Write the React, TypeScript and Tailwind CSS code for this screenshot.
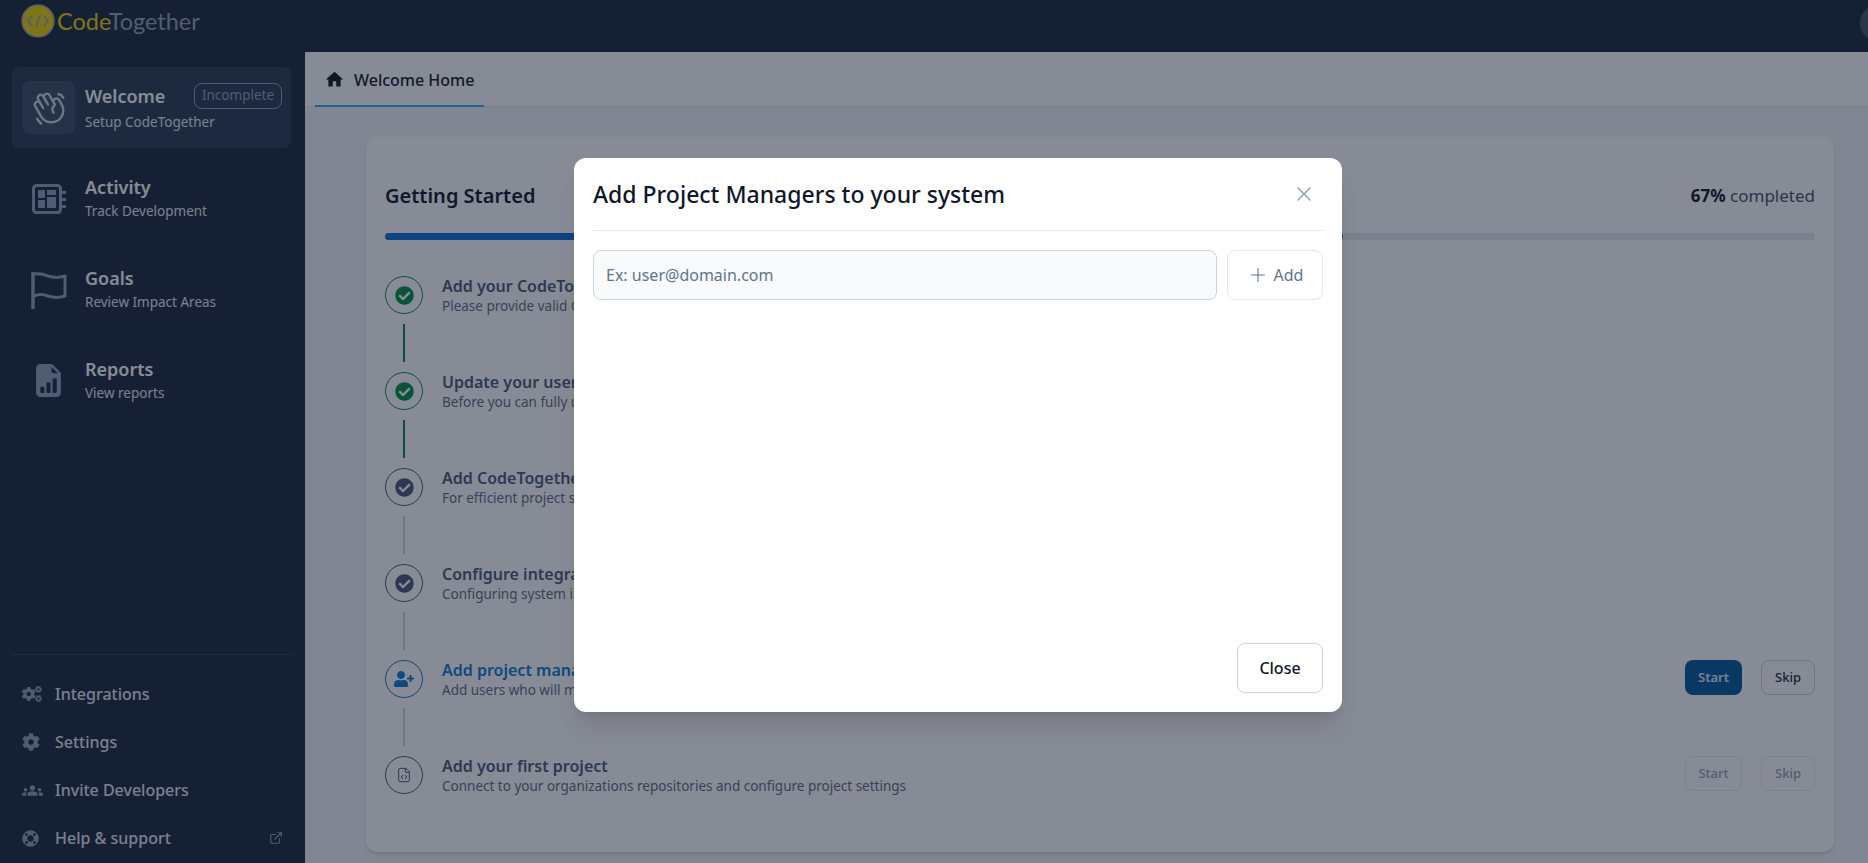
import { ExternalLink, FileCode, Plus, X } from 'lucide-react'
import { BsFileEarmarkBarGraphFill } from 'react-icons/bs'
import { FaCheckCircle, FaCog, FaCogs, FaLifeRing, FaUserPlus } from 'react-icons/fa'
import { MdGroups, MdHome } from 'react-icons/md'
import { PiHandWaving } from 'react-icons/pi'

const font = { fontFamily: '"Noto Sans", sans-serif' }

const ActivityIcon = () => (
  <svg width="34" height="30" viewBox="0 0 34 30" fill="none" className="text-slate-400">
    <rect x="1.5" y="1.5" width="27" height="27" rx="3" stroke="currentColor" strokeWidth="3" />
    <path d="M6 6h7v8H6zM15 6h9v5h-9zM6 16h7v8H6zM15 13h9v11h-9z" fill="currentColor" />
    <path d="M30 7h4v3h-4zM30 14h4v3h-4zM30 21h4v3h-4z" fill="currentColor" />
  </svg>
)

const FlagIcon = () => (
  <svg width="36" height="38" viewBox="0 0 36 38" fill="none" className="text-slate-400">
    <path d="M2 1v37" stroke="currentColor" strokeWidth="3.5" />
    <path
      d="M3 3c5-1 9 0 14 2 6 2 11 2 17 0v20c-6 2-11 2-17 0-5-2-9-2-14 0"
      stroke="currentColor"
      strokeWidth="3"
      strokeLinejoin="round"
    />
  </svg>
)

const navItems = [
  { title: 'Activity', sub: 'Track Development', icon: <ActivityIcon /> },
  { title: 'Goals', sub: 'Review Impact Areas', icon: <FlagIcon /> },
  { title: 'Reports', sub: 'View reports', icon: <BsFileEarmarkBarGraphFill size={33} className="text-slate-400" /> },
]

const bottomItems = [
  { label: 'Integrations', icon: <FaCogs size={20} /> },
  { label: 'Settings', icon: <FaCog size={18} /> },
  { label: 'Invite Developers', icon: <MdGroups size={21} /> },
  { label: 'Help & support', icon: <FaLifeRing size={17} /> },
]

const steps = [
  { title: 'Add your CodeTogether license', sub: 'Please provide valid CodeTogether license details', state: 'done' },
  { title: 'Update your user profile', sub: 'Before you can fully use the system, update your profile', state: 'done' },
  { title: 'Add CodeTogether admins', sub: 'For efficient project setup, add other administrators', state: 'checked' },
  { title: 'Configure integrations', sub: 'Configuring system integrations lets you connect tools', state: 'checked' },
  { title: 'Add project managers', sub: 'Add users who will manage projects in your organization', state: 'active' },
  { title: 'Add your first project', sub: 'Connect to your organizations repositories and configure project settings', state: 'todo' },
]

const StepIcon = ({ state }: { state: string }) => {
  if (state === 'done') {
    return (
      <div className="flex h-[38px] w-[38px] shrink-0 items-center justify-center rounded-full border border-[#048f44] text-[#048f44]">
        <FaCheckCircle size={19} />
      </div>
    )
  }
  if (state === 'checked') {
    return (
      <div className="flex h-[38px] w-[38px] shrink-0 items-center justify-center rounded-full border border-[#4b5b78] text-[#4b5b78]">
        <FaCheckCircle size={19} />
      </div>
    )
  }
  if (state === 'active') {
    return (
      <div className="flex h-[38px] w-[38px] shrink-0 items-center justify-center rounded-full border border-[#0a7cd2] text-[#0a7cd2]">
        <FaUserPlus size={20} />
      </div>
    )
  }
  return (
    <div className="flex h-[38px] w-[38px] shrink-0 items-center justify-center rounded-full border border-[#4b5b78] text-[#4b5b78]">
      <FileCode size={16} strokeWidth={1.5} />
    </div>
  )
}

export default function App() {
  return (
    <div className="relative h-[863px] w-[1868px] overflow-hidden bg-slate-100" style={font}>
      <header className="flex h-[52px] items-start justify-between bg-slate-800 pl-[21px] pt-1">
        <div className="flex items-center">
          <svg width="34" height="34" viewBox="0 0 34 34" fill="none">
            <circle cx="17" cy="17" r="16" fill="#efd302" stroke="#94a3b8" strokeWidth="1.5" />
            <path d="M11 12l-4 5 4 5M23 12l4 5-4 5M19 11l-4 12" stroke="#94a3b8" strokeWidth="1.8" />
          </svg>
          <span className="ml-[2px] text-[23.5px] leading-[34px] text-slate-400" style={{ fontFamily: 'Lato, sans-serif' }}>
            <span className="text-[#efd302]">Code</span>Together
          </span>
        </div>
        <div className="mr-[-28px] mt-px h-9 w-9 rounded-full bg-slate-600" />
      </header>

      <div className="flex h-[811px]">
        <aside className="flex w-[305px] shrink-0 flex-col justify-between bg-slate-800 px-3 pt-[15px]">
          <nav className="flex flex-col gap-[10px]">
            <div className="flex h-[81px] w-[279px] items-center gap-[10px] rounded-lg bg-[#2b3a52] pl-[10px] pr-[9px]">
              <div className="flex h-[53px] w-[53px] shrink-0 items-center justify-center rounded-lg bg-[#3e4d66] text-slate-300">
                <PiHandWaving size={38} />
              </div>
              <div className="flex-1">
                <div className="flex items-center justify-between">
                  <span className="text-[18px] font-semibold leading-[26px] text-white">Welcome</span>
                  <span className="flex h-[26px] w-[88px] items-center justify-center rounded-lg border border-slate-400 text-[13.5px] text-slate-400">
                    Incomplete
                  </span>
                </div>
                <div className="pt-[2px] text-[13.5px] leading-[22px] text-slate-200">Setup CodeTogether</div>
              </div>
            </div>
            {navItems.map((item) => (
              <div key={item.title} className="flex h-[81px] items-center gap-[10px] pl-[10px]">
                <div className="flex h-[53px] w-[53px] shrink-0 items-center justify-center">{item.icon}</div>
                <div className="-mt-[2px]">
                  <div className="text-[18px] font-semibold leading-[26px] text-white">{item.title}</div>
                  <div className="text-[13.5px] leading-[22px] text-slate-200">{item.sub}</div>
                </div>
              </div>
            ))}
          </nav>

          <div className="border-t border-slate-700 pb-px pt-[15px]">
            {bottomItems.map((item) => (
              <div key={item.label} className="flex h-12 items-center pl-[10px] text-slate-400">
                <div className="flex w-[33px] shrink-0">{item.icon}</div>
                <span className="text-[16px] font-medium text-slate-200">{item.label}</span>
                {item.label === 'Help & support' && <ExternalLink size={14} className="ml-auto mr-[10px]" />}
              </div>
            ))}
          </div>
        </aside>

        <main className="min-w-0 flex-1">
          <div className="flex h-[55px] border-b border-slate-200 bg-white pl-[10px]">
            <div className="flex h-[55px] w-[169px] items-center gap-[9px] border-b-2 border-[#22b0ff] pl-[9px] pt-[2px]">
              <MdHome size={21} className="text-slate-900" />
              <span className="text-[16px] font-medium text-slate-900">Welcome Home</span>
            </div>
          </div>

          <div className="pl-[61px] pr-[34px] pt-[30px]">
            <section className="h-[715px] rounded-xl bg-white px-[19px] pt-[39px] shadow-md">
              <div className="flex h-10 items-center justify-between">
                <h2 className="text-[20px] font-semibold text-slate-900">Getting Started</h2>
                <div className="text-[17px] text-slate-600">
                  <span className="font-bold text-slate-900">67%</span> completed
                </div>
              </div>
              <div className="mt-[17px] h-[7px] rounded-full bg-slate-200">
                <div className="h-full w-[67%] rounded-full bg-[#0670d6]" />
              </div>

              <div className="mt-[36px]">
                {steps.map((step, i) => (
                  <div key={step.title}>
                    <div className="flex h-[38px] items-center gap-[19px]">
                      <StepIcon state={step.state} />
                      <div className="flex-1 pt-[2px]">
                        <div className={`text-[16px] font-semibold leading-[21px] ${step.state === 'active' ? 'text-[#0a7cd2]' : 'text-[#4b5b78]'}`}>
                          {step.title}
                        </div>
                        <div className="text-[13.5px] leading-[19px] text-[#5f6c85]">{step.sub}</div>
                      </div>
                      {step.state === 'active' && (
                        <div className="-mt-1 flex gap-[19px] text-[13px] font-medium">
                          <button className="h-[35px] w-[57px] rounded-lg bg-[#00589c] pt-px font-semibold text-slate-200">Start</button>
                          <button className="h-[35px] w-[54px] rounded-lg border border-slate-300 pt-px text-slate-800">Skip</button>
                        </div>
                      )}
                      {step.state === 'todo' && (
                        <div className="-mt-1 flex gap-[19px] text-[13px] font-medium text-slate-400">
                          <button className="h-[35px] w-[57px] rounded-lg border border-slate-200 pt-px">Start</button>
                          <button className="h-[35px] w-[54px] rounded-lg border border-slate-200 pt-px">Skip</button>
                        </div>
                      )}
                    </div>
                    {i < steps.length - 1 && (
                      <div className={`my-[10px] ml-[18px] h-[38px] w-0.5 ${i < 2 ? 'bg-[#048f44]' : 'bg-slate-300'}`} />
                    )}
                  </div>
                ))}
              </div>
            </section>
          </div>
        </main>
      </div>

      {/* modal backdrop */}
      <div className="absolute inset-0 z-40 flex items-start justify-center bg-slate-900/50 pl-[48px] pt-[158px]">
        <div className="flex h-[554px] w-[768px] flex-col rounded-xl bg-white px-[19px] pb-[19px] shadow-xl">
          <div className="flex h-[73px] shrink-0 items-center justify-between border-b border-slate-200">
            <h3 className="text-[23px] font-medium text-slate-900">Add Project Managers to your system</h3>
            <X size={24} strokeWidth={1.5} className="mr-[7px] text-slate-400" />
          </div>
          <div className="mt-[19px] flex gap-[10px]">
            <input
              className="h-[50px] flex-1 rounded-lg border border-slate-300 bg-slate-50 px-[12px] text-[16px] text-slate-900 placeholder:text-slate-500"
              placeholder="Ex: user@domain.com"
            />
            <button className="flex h-[50px] w-[96px] items-center justify-center gap-[5px] rounded-lg border border-slate-200 text-[16px] text-slate-500">
              <Plus size={22} strokeWidth={1.2} />
              Add
            </button>
          </div>
          <div className="mt-auto flex justify-end">
            <button className="h-[50px] w-[86px] rounded-lg border border-slate-300 text-[16px] font-medium text-slate-900">
              Close
            </button>
          </div>
        </div>
      </div>
    </div>
  )
}
